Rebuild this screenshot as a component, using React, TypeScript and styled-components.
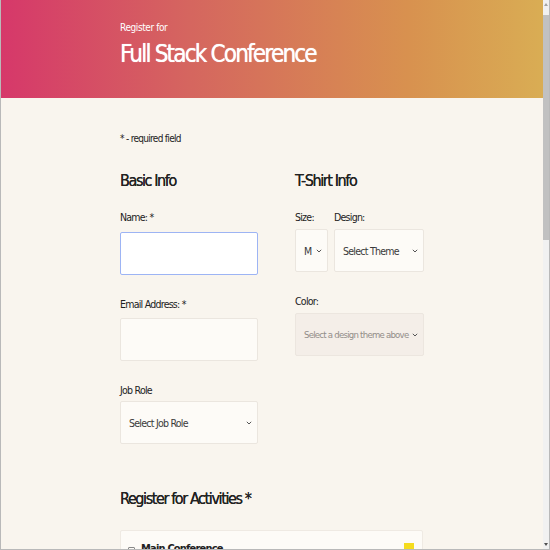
import styled, { createGlobalStyle } from 'styled-components';

const GlobalStyle = createGlobalStyle`
  html, body {
    margin: 0;
    padding: 0;
    background: #f9f5ee;
    overflow: hidden;
  }
  body {
    font-family: 'DejaVu Sans', 'Liberation Sans', sans-serif;
    font-stretch: condensed;
    color: #222;
  }
`;

const Page = styled.div`
  display: flex;
  width: 550px;
  height: 550px;
  box-sizing: border-box;
  border-left: 1px solid #b9b9b9;
  border-bottom: 1px solid #b9b9b9;
  overflow: hidden;
`;

const Content = styled.div`
  flex: 1;
  min-width: 0;
  overflow: hidden;
`;

const Header = styled.header`
  height: 98px;
  background: linear-gradient(90deg, #d6386a 0%, #d5665f 35%, #d8914f 75%, #d9ad54 100%);
  color: #fff;
  padding: 21px 0 0 119px;
  box-sizing: border-box;
`;

const Overline = styled.p`
  margin: 0;
  font-size: 10px;
  line-height: 14px;
  letter-spacing: -0.4px;
`;

const Title = styled.h1`
  margin: 4px 0 0;
  font-size: 24px;
  line-height: 30px;
  font-weight: 400;
  letter-spacing: -1.8px;
  text-shadow: 0 0 0.7px #fff;
`;

const Main = styled.main`
  padding: 34px 0 0 119px;
`;

const Note = styled.p`
  margin: 0;
  font-size: 10px;
  line-height: 14px;
  letter-spacing: -0.7px;
`;

const Columns = styled.div`
  display: grid;
  grid-template-columns: 138px 129px;
  column-gap: 37px;
  margin-top: 25px;
`;

const Section = styled.section`
  display: flex;
  flex-direction: column;
`;

const Heading = styled.h2`
  margin: 0 0 19px;
  font-size: 16px;
  line-height: 20px;
  font-weight: 400;
  letter-spacing: -1.4px;
  text-shadow: 0 0 0.4px #222;
`;

const Label = styled.label<{ $gap: number }>`
  display: block;
  font-size: 10.5px;
  line-height: 14px;
  letter-spacing: -0.75px;
  margin-bottom: ${(p) => p.$gap}px;
`;

const Field = styled.div<{ $last?: boolean }>`
  margin-bottom: ${(p) => (p.$last ? 0 : 22)}px;
`;

const TextInput = styled.div<{ $focus?: boolean }>`
  height: 43px;
  box-sizing: border-box;
  background: ${(p) => (p.$focus ? '#ffffff' : '#fdfbf7')};
  border: 1px solid ${(p) => (p.$focus ? '#9db4f4' : '#ebe6df')};
  border-radius: 2px;
`;

const Select = styled.div<{ $disabled?: boolean; $w?: number }>`
  height: 43px;
  width: ${(p) => (p.$w ? `${p.$w}px` : 'auto')};
  box-sizing: border-box;
  display: flex;
  align-items: center;
  justify-content: space-between;
  padding: 0 5px 0 8px;
  background: ${(p) => (p.$disabled ? '#f4eee8' : '#fdfbf7')};
  border: 1px solid ${(p) => (p.$disabled ? '#ece6df' : '#ebe6df')};
  border-radius: 2px;
  font-size: ${(p) => (p.$disabled ? 9.5 : 10.5)}px;
  letter-spacing: ${(p) => (p.$disabled ? -0.75 : -0.75)}px;
  white-space: nowrap;
  color: ${(p) => (p.$disabled ? '#928d88' : '#3a3a3a')};
`;

const Chevron = styled.svg`
  width: 6px;
  height: 4px;
  flex: none;
`;

const Arrow = () => (
  <Chevron viewBox="0 0 6 4">
    <path d="M0.8 0.8 L3 3 L5.2 0.8" fill="none" stroke="#555" strokeWidth="1" />
  </Chevron>
);

const Row = styled.div`
  display: flex;
  gap: 6px;
`;

const ActivitiesHeading = styled(Heading)`
  margin: 45px 0 21px;
`;

const ActivityBox = styled.div`
  width: 303px;
  height: 60px;
  background: #fdfbf7;
  border: 1px solid #efeae3;
  border-radius: 2px;
  position: relative;
  padding: 11px 0 0 7px;
  box-sizing: border-box;
  display: flex;
  gap: 6px;
  align-items: flex-start;
  font-size: 11px;
  line-height: 14px;
  font-weight: 700;
  letter-spacing: -0.8px;
`;

const Checkbox = styled.span`
  width: 5px;
  height: 5px;
  margin-top: 5px;
  border: 1px solid #888;
  border-radius: 1px;
`;

const Badge = styled.span`
  position: absolute;
  right: 8px;
  top: 12px;
  width: 10px;
  height: 10px;
  background: #f5dc1e;
`;

const Scrollbar = styled.div`
  width: 7px;
  flex: none;
  display: flex;
  flex-direction: column;
  background: #f1f1f1;
  border-right: 1px solid #b9b9b9;
  box-sizing: border-box;
  padding-bottom: 3px;
`;

const ScrollArrow = styled.div<{ $down?: boolean }>`
  margin: ${(p) => (p.$down ? 'auto 0 0 1px' : '3px 0 0 1px')};
  width: 0;
  height: 0;
  border-left: 2px solid transparent;
  border-right: 2px solid transparent;
  ${(p) => (p.$down ? 'border-top: 3px solid #505050;' : 'border-bottom: 3px solid #a3a3a3;')}
`;

const ScrollThumb = styled.div`
  margin-top: 9px;
  height: 225px;
  background: #c1c1c1;
`;

export default function App() {
  return (
    <Page>
      <GlobalStyle />
      <Content>
        <Header>
          <Overline>Register for</Overline>
          <Title>Full Stack Conference</Title>
        </Header>
        <Main>
          <Note>* - required field</Note>
          <Columns>
            <Section>
              <Heading>Basic Info</Heading>
              <Field>
                <Label $gap={8}>Name: *</Label>
                <TextInput $focus />
              </Field>
              <Field>
                <Label $gap={7}>Email Address: *</Label>
                <TextInput />
              </Field>
              <Field $last>
                <Label $gap={4}>Job Role</Label>
                <Select>
                  Select Job Role
                  <Arrow />
                </Select>
              </Field>
            </Section>
            <Section>
              <Heading>T-Shirt Info</Heading>
              <Row>
                <Field>
                  <Label $gap={5}>Size:</Label>
                  <Select $w={33}>
                    M
                    <Arrow />
                  </Select>
                </Field>
                <Field>
                  <Label $gap={5}>Design:</Label>
                  <Select $w={90}>
                    Select Theme
                    <Arrow />
                  </Select>
                </Field>
              </Row>
              <Field $last>
                <Label $gap={5}>Color:</Label>
                <Select $disabled>
                  Select a design theme above
                  <Arrow />
                </Select>
              </Field>
            </Section>
          </Columns>
          <ActivitiesHeading>Register for Activities *</ActivitiesHeading>
          <ActivityBox>
            <Checkbox />
            Main Conference
            <Badge />
          </ActivityBox>
        </Main>
      </Content>
      <Scrollbar>
        <ScrollArrow />
        <ScrollThumb />
        <ScrollArrow $down />
      </Scrollbar>
    </Page>
  );
}
